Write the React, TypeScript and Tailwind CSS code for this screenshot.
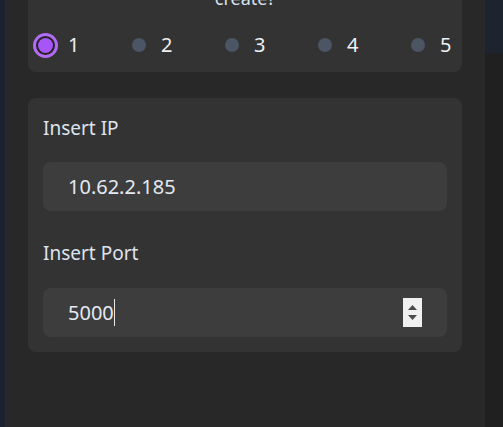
import { useState } from "react";

const options = [1, 2, 3, 4, 5];

function Radio({ checked }: { checked: boolean }) {
  return (
    <span className="w-[25px] h-[25px] flex items-center justify-center shrink-0">
      {checked ? (
        <span className="w-[25px] h-[25px] rounded-full border-[3px] border-[#b26cf4] bg-[#232323] flex items-center justify-center">
          <span className="w-[15px] h-[15px] rounded-full bg-[#a855f7]" />
        </span>
      ) : (
        <span className="w-[14px] h-[14px] rounded-full bg-[#4b5563]" />
      )}
    </span>
  );
}

function Spinner() {
  return (
    <div className="w-[19px] h-[29px] bg-[#f0f0f0] flex flex-col items-center justify-center gap-[5px]">
      <svg width="9" height="5" viewBox="0 0 9 5">
        <polygon points="4.5,0 9,5 0,5" fill="#4a4a4a" />
      </svg>
      <svg width="9" height="5" viewBox="0 0 9 5">
        <polygon points="0,0 9,0 4.5,5" fill="#4a4a4a" />
      </svg>
    </div>
  );
}

export default function App() {
  const [selected, setSelected] = useState(1);

  return (
    <div className="w-[503px] h-[427px] flex overflow-hidden bg-[#282828] font-['Noto_Sans',sans-serif]">
      <div className="w-[5px] bg-[#1b2130] shrink-0" />

      <div className="flex-1 px-[23px] overflow-hidden">
        {/* count picker */}
        <div className="bg-[#333333] rounded-b-lg -mt-[16px] pb-[14px]">
          <p className="text-center text-[18px] leading-[28px] text-[#dbe3f0]">
            create?
          </p>
          <div className="flex items-center pl-[5px] mt-[20px] h-[26px]">
            {options.map((n) => (
              <button
                key={n}
                onClick={() => setSelected(n)}
                className={`flex items-center gap-[10px] ${n < 5 ? "w-[93px]" : ""}`}
              >
                <Radio checked={selected === n} />
                <span className="text-[20px] leading-none text-[#eef0f5]">{n}</span>
              </button>
            ))}
          </div>
        </div>

        {/* connection */}
        <div className="mt-[26px] bg-[#333333] rounded-lg p-[15px]">
          <label className="block text-[19px] leading-[28px] pt-[1px] text-[#dde4ee]">Insert IP</label>
          <div className="mt-[20px] h-[49px] rounded-lg bg-[#3d3d3d] flex items-center px-[25px]">
            <span className="text-[20px] text-[#e4e9f2]">10.62.2.185</span>
          </div>

          <label className="block mt-[28px] text-[19px] leading-[28px] text-[#dde4ee]">Insert Port</label>
          <div className="mt-[21px] h-[49px] rounded-lg bg-[#3d3d3d] flex items-center pl-[25px] pr-[25px]">
            <span className="text-[20px] text-[#e4e9f2]">5000</span>
            <span className="w-px h-[27px] bg-[#e8e8e8]" />
            <div className="flex-1" />
            <Spinner />
          </div>
        </div>
      </div>

      <div className="w-[18px] shrink-0 flex flex-col">
        <div className="h-[53px] bg-[#1e2330]" />
        <div className="flex-1 bg-[#202020]" />
      </div>
    </div>
  );
}
